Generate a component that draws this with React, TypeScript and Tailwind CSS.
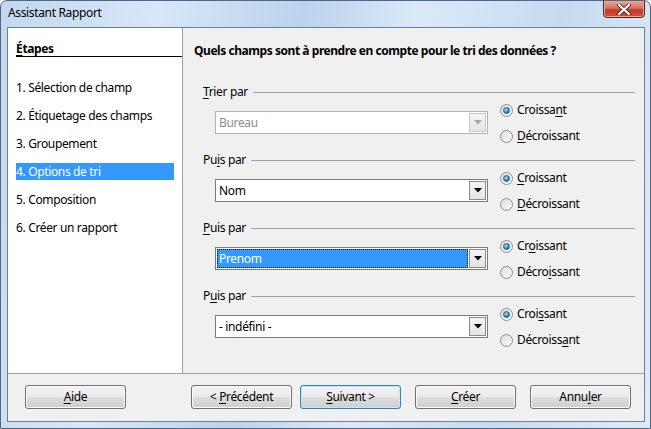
import React from "react";

const FONT = "font-['Noto_Sans','Open_Sans',sans-serif] tracking-[-0.35px]";

// text with one underlined mnemonic letter
const Mn: React.FC<{ text: string; at: number }> = ({ text, at }) => (
  <span className="whitespace-pre">
    {text.slice(0, at)}
    <span className="underline underline-offset-[2px]">{text.charAt(at)}</span>
    {text.slice(at + 1)}
  </span>
);

const steps = [
  "1. Sélection de champ",
  "2. Étiquetage des champs",
  "3. Groupement",
  "4. Options de tri",
  "5. Composition",
  "6. Créer un rapport",
];

type Group = {
  label: string;
  labelAt: number;
  value: string;
  state: "disabled" | "normal" | "selected";
  asc: number;
  desc: number;
};

const groups: Group[] = [
  { label: "Trier par", labelAt: 0, value: "Bureau", state: "disabled", asc: 7, desc: 0 },
  { label: "Puis par", labelAt: 2, value: "Nom", state: "normal", asc: 0, desc: 0 },
  { label: "Puis par", labelAt: 0, value: "Prenom", state: "selected", asc: 2, desc: 5 },
  { label: "Puis par", labelAt: 1, value: "- indéfini -", state: "normal", asc: 4, desc: 8 },
];

const Radio: React.FC<{ checked?: boolean }> = ({ checked }) => (
  <div className="w-[13px] h-[13px] rounded-full border border-[#8e8f8f] bg-[linear-gradient(135deg,#dcdcdc,#fbfbfb)] flex items-center justify-center shrink-0">
    {checked && (
      <div className="w-[7px] h-[7px] rounded-full border border-[#2c628b] bg-[radial-gradient(circle_at_40%_35%,#aee6ff,#2a8ad4_55%,#0c3f6d)]" />
    )}
  </div>
);

const Combo: React.FC<{ value: string; state: Group["state"] }> = ({ value, state }) => {
  const disabled = state === "disabled";
  return (
    <div
      className={`w-[273px] h-[23px] bg-white border flex items-stretch p-[1px] ${
        disabled ? "border-[#adb2b5]" : "border-[#7a7a7a]"
      }`}
    >
      <div className="flex-1 flex items-stretch pr-[1px]">
        {state === "selected" ? (
          <div className="flex-1 bg-[#3399ff] text-white border border-dotted border-black pl-[1px] flex items-center text-[12px]">
            {value}
          </div>
        ) : (
          <div
            className={`flex-1 pl-[2px] flex items-center text-[12px] ${
              disabled ? "text-[#8d8d8d]" : "text-black"
            }`}
          >
            {value}
          </div>
        )}
      </div>
      <div
        className={`w-[17px] border flex items-center justify-center bg-[linear-gradient(#f4f4f4,#e4e4e4)] ${
          disabled ? "border-[#c9c9c9]" : "border-[#8a8a8a]"
        }`}
      >
        <svg width="8" height="5" viewBox="0 0 8 5">
          <path d="M0 0 H8 L4 4.5 Z" fill={disabled ? "#a8a8a8" : "#000"} />
        </svg>
      </div>
    </div>
  );
};

const Btn: React.FC<{ children: React.ReactNode; def?: boolean }> = ({ children, def }) => (
  <div
    className={`w-[101px] h-[24px] rounded-[3px] border flex items-center justify-center text-[12px] text-black bg-[linear-gradient(#f2f2f2,#ebebeb_50%,#dddddd_50%,#cfcfcf)] ${
      def
        ? "border-[#3c7fb1] shadow-[inset_0_0_0_1px_#c5e6f8]"
        : "border-[#707070] shadow-[inset_0_0_0_1px_#fbfbfb]"
    }`}
  >
    {children}
  </div>
);

export default function App() {
  return (
    <div
      className={`${FONT} w-[651px] h-[429px] flex flex-col rounded-t-[7px] border border-[#4f6685] bg-[linear-gradient(100deg,#c3d8ef_0%,#d6e7f8_22%,#bcd3ec_42%,#d9e9f9_58%,#c6dbf1_78%,#dfecf9_100%)] overflow-hidden`}
    >
      {/* title bar */}
      <div className="h-[26px] flex items-start pl-[7px]">
        <div className="h-[24px] flex items-center text-[12px] text-black">Assistant Rapport</div>
        <div className="ml-auto mr-[5px] -mt-[1px] w-[42px] h-[18px] rounded-b-[4px] border border-[#5c1f16] bg-[linear-gradient(#e6a597,#d57463_45%,#bf3a25_55%,#c8533d)] shadow-[inset_0_0_0_1px_#e9a79a] flex items-center justify-center">
          <svg width="14" height="11" viewBox="0 0 14 11">
            <path d="M2 1 L12 10 M12 1 L2 10" stroke="#5a2a22" strokeWidth="4" strokeLinecap="round" />
            <path d="M2 1 L12 10 M12 1 L2 10" stroke="#ffffff" strokeWidth="2.2" strokeLinecap="round" />
          </svg>
        </div>
      </div>

      {/* client area */}
      <div className="flex-1 ml-[6px] mr-[5px] mb-[6px] border border-[#6d7f95] bg-[#f0f0f0] flex flex-col text-[12px] text-black">
        <div className="h-[345px] flex">
          {/* steps */}
          <div className="w-[175px] bg-white border-r border-[#a0a0a0] flex flex-col">
            <div className="ml-[8px] mt-[13px] h-[16px] leading-[15px] border-b border-black font-bold">
              <span className="underline underline-offset-[2px]">É</span>tapes
            </div>
            <div className="ml-[8px] mt-[22px] flex flex-col gap-[11px]">
              {steps.map((s, i) => (
                <div
                  key={s}
                  className={`w-[158px] h-[17px] leading-[17px] whitespace-nowrap ${
                    i === 3 ? "bg-[#3399ff] text-white" : ""
                  }`}
                >
                  {s}
                </div>
              ))}
            </div>
          </div>

          {/* sort options */}
          <div className="flex-1 flex flex-col">
            <div className="mt-[15px] ml-[11px] h-[16px] leading-[16px] font-bold tracking-[-0.45px]">
              Quels champs sont à prendre en compte pour le tri des données ?
            </div>
            <div className="mt-[25px] ml-[20px] mr-[9px] flex flex-col">
              {groups.map((g, i) => (
                <div key={i} className="h-[68px] flex flex-col">
                  <div className="h-[16px] flex items-center">
                    <Mn text={g.label} at={g.labelAt} />
                    <div className="flex-1 h-px bg-[#a0a0a0] ml-[5px]" />
                  </div>
                  <div className="flex items-start">
                    <div className="ml-[12px] mt-[11px]">
                      <Combo value={g.value} state={g.state} />
                    </div>
                    <div className="ml-[12px] mt-[2px] flex flex-col gap-[10px]">
                      <div className="h-[16px] flex items-center gap-[4px]">
                        <Radio checked />
                        <Mn text="Croissant" at={g.asc} />
                      </div>
                      <div className="h-[16px] flex items-center gap-[4px]">
                        <Radio />
                        <Mn text="Décroissant" at={g.desc} />
                      </div>
                    </div>
                  </div>
                </div>
              ))}
            </div>
          </div>
        </div>

        {/* buttons */}
        <div className="flex-1 border-t border-[#a0a0a0] flex items-start pt-[11px] pl-[17px]">
          <Btn>
            <Mn text="Aide" at={0} />
          </Btn>
          <div className="ml-[65px] flex gap-[8px]">
            <Btn>
              <Mn text="< Précédent" at={2} />
            </Btn>
            <Btn def>
              <Mn text="Suivant >" at={0} />
            </Btn>
          </div>
          <div className="ml-[14px] flex gap-[14px]">
            <Btn>
              <Mn text="Créer" at={0} />
            </Btn>
            <Btn>
              <Mn text="Annuler" at={4} />
            </Btn>
          </div>
        </div>
      </div>
    </div>
  );
}
